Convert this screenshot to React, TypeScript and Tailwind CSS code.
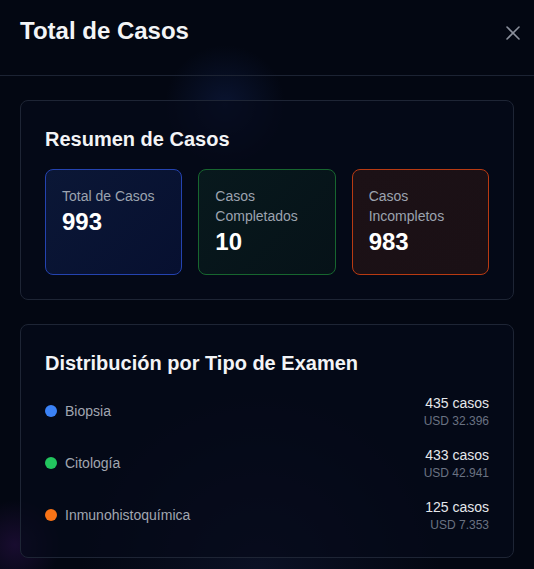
import { X } from "lucide-react";

type Stat = {
  label: string;
  value: number;
  box: string;
};

type ExamRow = {
  name: string;
  count: number;
  amount: string;
  dot: string;
};

const stats: Stat[] = [
  { label: "Total de Casos", value: 993, box: "border-[#2443b0] bg-[linear-gradient(135deg,#0b1736,#071030)]" },
  { label: "Casos Completados", value: 10, box: "border-[#17662f] bg-[linear-gradient(135deg,#08191d,#061218)]" },
  { label: "Casos Incompletos", value: 983, box: "border-[#b83a12] bg-[linear-gradient(135deg,#1c1116,#1a1015)]" },
];

const exams: ExamRow[] = [
  { name: "Biopsia", count: 435, amount: "USD 32.396", dot: "bg-[#3b82f6]" },
  { name: "Citología", count: 433, amount: "USD 42.941", dot: "bg-[#22c55e]" },
  { name: "Inmunohistoquímica", count: 125, amount: "USD 7.353", dot: "bg-[#f97316]" },
];

export default function App() {
  return (
    <div
      className="relative w-[534px] h-[569px] overflow-hidden bg-[#030712] bg-[radial-gradient(circle_at_225px_105px,rgba(30,58,138,0.25),transparent_60px),radial-gradient(circle_at_15px_545px,rgba(88,28,135,0.25),transparent_45px),radial-gradient(circle_at_260px_570px,rgba(30,41,80,0.3),transparent_180px)] text-white"
      style={{ fontFamily: '"Liberation Sans", Arial, sans-serif' }}
    >
      <div className="relative h-[76px] border-b border-[#1c2333] px-5 pt-[15px]">
        <h2 className="text-2xl font-bold leading-8 text-gray-100">Total de Casos</h2>
        <button className="absolute right-[9px] top-[21px] text-[#8b909c]">
          <X size={24} strokeWidth={1.6} />
        </button>
      </div>

      <div className="px-5 pt-6 space-y-6">
        <div className="rounded-lg border border-[#1e2535] bg-[#050a19]/70 p-6">
          <h3 className="text-xl font-bold leading-7 mb-4 text-gray-100">Resumen de Casos</h3>
          <div className="grid grid-cols-3 gap-4">
            {stats.map((s) => (
              <div key={s.label} className={`rounded-lg border p-4 ${s.box}`}>
                <p className="text-sm leading-5 text-[#9ca3af]">{s.label}</p>
                <p className="text-2xl font-bold leading-8 text-white">{s.value}</p>
              </div>
            ))}
          </div>
        </div>

        <div className="rounded-lg border border-[#1e2535] bg-[#050a19]/70 p-6">
          <h3 className="text-xl font-bold leading-7 mb-4 text-gray-100">Distribución por Tipo de Examen</h3>
          <div className="space-y-4">
            {exams.map((e) => (
              <div key={e.name} className="flex items-center justify-between">
                <div className="flex items-center gap-2">
                  <span className={`w-3 h-3 rounded-full ${e.dot}`} />
                  <span className="text-sm text-[#a1a6b0]">{e.name}</span>
                </div>
                <div className="text-right">
                  <p className="text-sm leading-5 text-gray-200">{e.count} casos</p>
                  <p className="text-xs leading-4 text-gray-500">{e.amount}</p>
                </div>
              </div>
            ))}
          </div>
        </div>
      </div>
    </div>
  );
}
